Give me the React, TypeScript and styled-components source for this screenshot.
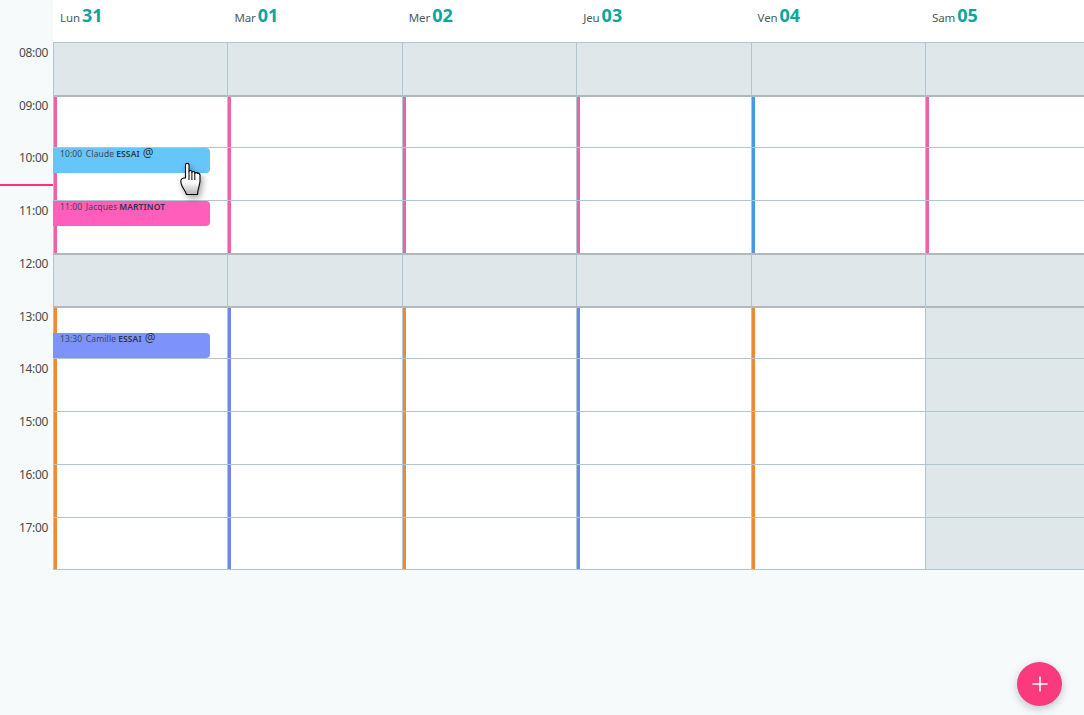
import React from "react";
import styled, { createGlobalStyle } from "styled-components";

const Global = createGlobalStyle`
  html, body { margin: 0; padding: 0; height: 100%; overflow: hidden; background: #f6fafb; }
  #root { height: 100%; }
`;

const ROW = 52.74;

const Page = styled.div`
  position: relative;
  display: flex;
  width: 1084px;
  height: 715px;
  overflow: hidden;
  background: #f6fafb;
  font-family: "Noto Sans", "Open Sans", sans-serif;
`;

const Gutter = styled.div`
  flex: 0 0 53px;
  padding-top: 42px;
  position: relative;
`;

const HourLabel = styled.div`
  height: ${ROW}px;
  box-sizing: border-box;
  padding: 1.9px 5px 0 0;
  text-align: right;
  font-size: 12px;
  line-height: 18px;
  letter-spacing: -0.35px;
  color: #4a4a4a;
`;

const NowMarker = styled.div`
  position: absolute;
  left: 0;
  top: 184px;
  width: 54px;
  height: 2px;
  background: #f5367c;
`;

const Board = styled.div`
  flex: 0 0 1046.4px;
  display: flex;
`;

const Day = styled.div`
  position: relative;
  flex: 0 0 174.4px;
  display: flex;
  flex-direction: column;
`;

const DayHead = styled.div`
  height: 42px;
  flex: none;
  box-sizing: border-box;
  padding: 3px 0 0 7px;
  background: #fff;
  display: flex;
  align-items: baseline;
  gap: 2px;
  color: #4b5b63;
`;

const DayName = styled.span`
  font-size: 11.5px;
  letter-spacing: -0.1px;
`;

const DayNum = styled.span`
  font-size: 18px;
  line-height: 24px;
  font-weight: 700;
  color: #0aa59e;
`;

const Cell = styled.div<{ $closed?: boolean; $bar?: string; $strong?: boolean }>`
  height: ${ROW}px;
  flex: none;
  box-sizing: border-box;
  background: ${(p) => (p.$closed ? "#dfe7ea" : "#fff")};
  border-top: ${(p) => (p.$strong ? "2px solid #b0b8bc" : "1px solid #afc5cf")};
  border-left: 1px solid #afc5cf;
  position: relative;
  &::before {
    content: "";
    display: ${(p) => (p.$bar ? "block" : "none")};
    position: absolute;
    left: 0;
    top: 0;
    bottom: 0;
    width: 3px;
    background: ${(p) => p.$bar};
  }
`;

const ClosingLine = styled.div`
  height: 1px;
  flex: none;
  background: #afc5cf;
`;

const Appointment = styled.div<{ $top: number; $color: string }>`
  position: absolute;
  left: 0;
  top: ${(p) => p.$top}px;
  width: 157px;
  height: 25px;
  box-sizing: border-box;
  padding: 0 0 0 7px;
  border-radius: 0 4px 4px 0;
  background: ${(p) => p.$color};
  font-size: 8.5px;
  line-height: 12px;
  letter-spacing: 0.12px;
  color: #3d4752;
  white-space: nowrap;
  display: flex;
  align-items: flex-start;
  gap: 3px;
`;

const Time = styled.span`
  margin-right: 0.5px;
`;

const LastName = styled.b`
  font-weight: 600;
  color: #2c3640;
  margin-left: -1px;
`;

const At = styled.span`
  font-size: 12px;
  line-height: 10px;
  color: #2c3640;
`;

const Fab = styled.button`
  position: absolute;
  right: 22px;
  bottom: 9px;
  width: 45px;
  height: 44px;
  padding: 0;
  border: 0;
  border-radius: 50%;
  background: #fa3a7c;
  box-shadow: 0 3px 8px rgba(60, 80, 90, 0.3);
  display: flex;
  align-items: center;
  justify-content: center;
`;

const Pointer = styled.svg`
  position: absolute;
  left: 180px;
  top: 161px;
  filter: drop-shadow(2px 3px 3px rgba(0, 0, 0, 0.35));
`;

type DayData = {
  name: string;
  num: string;
  am: string;
  pm?: string;
};

const pink = "#ee63a8";
const blue = "#4a97e2";
const orange = "#ee8a33";
const indigo = "#6d87ec";

const days: DayData[] = [
  { name: "Lun", num: "31", am: pink, pm: orange },
  { name: "Mar", num: "01", am: pink, pm: indigo },
  { name: "Mer", num: "02", am: pink, pm: orange },
  { name: "Jeu", num: "03", am: pink, pm: indigo },
  { name: "Ven", num: "04", am: blue, pm: orange },
  { name: "Sam", num: "05", am: pink },
];

const hours = ["08:00", "09:00", "10:00", "11:00", "12:00", "13:00", "14:00", "15:00", "16:00", "17:00"];

const barFor = (d: DayData, i: number) => {
  if (i >= 1 && i <= 3) return d.am;
  if (i >= 5) return d.pm;
  return undefined;
};

export default function App() {
  return (
    <Page>
      <Global />
      <Gutter>
        {hours.map((h) => (
          <HourLabel key={h}>{h}</HourLabel>
        ))}
        <NowMarker />
      </Gutter>
      <Board>
        {days.map((d, di) => (
          <Day key={d.num}>
            <DayHead>
              <DayName>{d.name}</DayName>
              <DayNum>{d.num}</DayNum>
            </DayHead>
            {hours.map((h, i) => {
              const bar = barFor(d, i);
              return <Cell key={h} $closed={!bar} $bar={bar} $strong={i === 1 || i === 4 || i === 5} />;
            })}
            <ClosingLine />
            {di === 0 && (
              <>
                <Appointment $top={148} $color="#66c6fa">
                  <Time>10:00</Time> Claude <LastName>ESSAI</LastName> <At>@</At>
                </Appointment>
                <Appointment $top={201} $color="#ff5fba">
                  <Time>11:00</Time> Jacques <LastName>MARTINOT</LastName>
                </Appointment>
                <Appointment $top={333} $color="#7d93fb">
                  <Time>13:30</Time> Camille <LastName>ESSAI</LastName> <At>@</At>
                </Appointment>
              </>
            )}
          </Day>
        ))}
      </Board>
      <Pointer width="24" height="36" viewBox="0 0 24 36" fill="none">
        <defs>
          <linearGradient id="hand" x1="0" y1="0" x2="0" y2="1">
            <stop offset="0.6" stopColor="#ffffff" />
            <stop offset="1" stopColor="#b5b5b5" />
          </linearGradient>
        </defs>
        <path
          d="M5.500 17V4c0-2.400 3.500-2.400 3.500 0v6.500c0-1.400 2.900-1.400 2.900 0v1c0-1.300 2.900-1.300 2.900 0v1c0-1.200 2.900-1.200 2.900 0 0-.6 2.300-.4 2.300 1.500v6c0 4-2.200 7-2.500 13.500H6.500C5.500 30 3 27.500 1.800 24.500 .6 21.500 .4 19 1.800 17.800c1-.9 2.700-.9 3.700-.8z"
          fill="url(#hand)"
          stroke="#000"
          strokeWidth="1.1"
          strokeLinejoin="round"
        />
        <path d="M9 10.500V19M11.900 11.500V19M14.800 12.500V19" stroke="#000" strokeWidth="1" />
      </Pointer>
      <Fab aria-label="Ajouter">
        <svg width="18" height="18" viewBox="0 0 18 18">
          <path d="M9 1.500v15M1.500 9h15" stroke="#fff" strokeWidth="1.6" />
        </svg>
      </Fab>
    </Page>
  );
}
